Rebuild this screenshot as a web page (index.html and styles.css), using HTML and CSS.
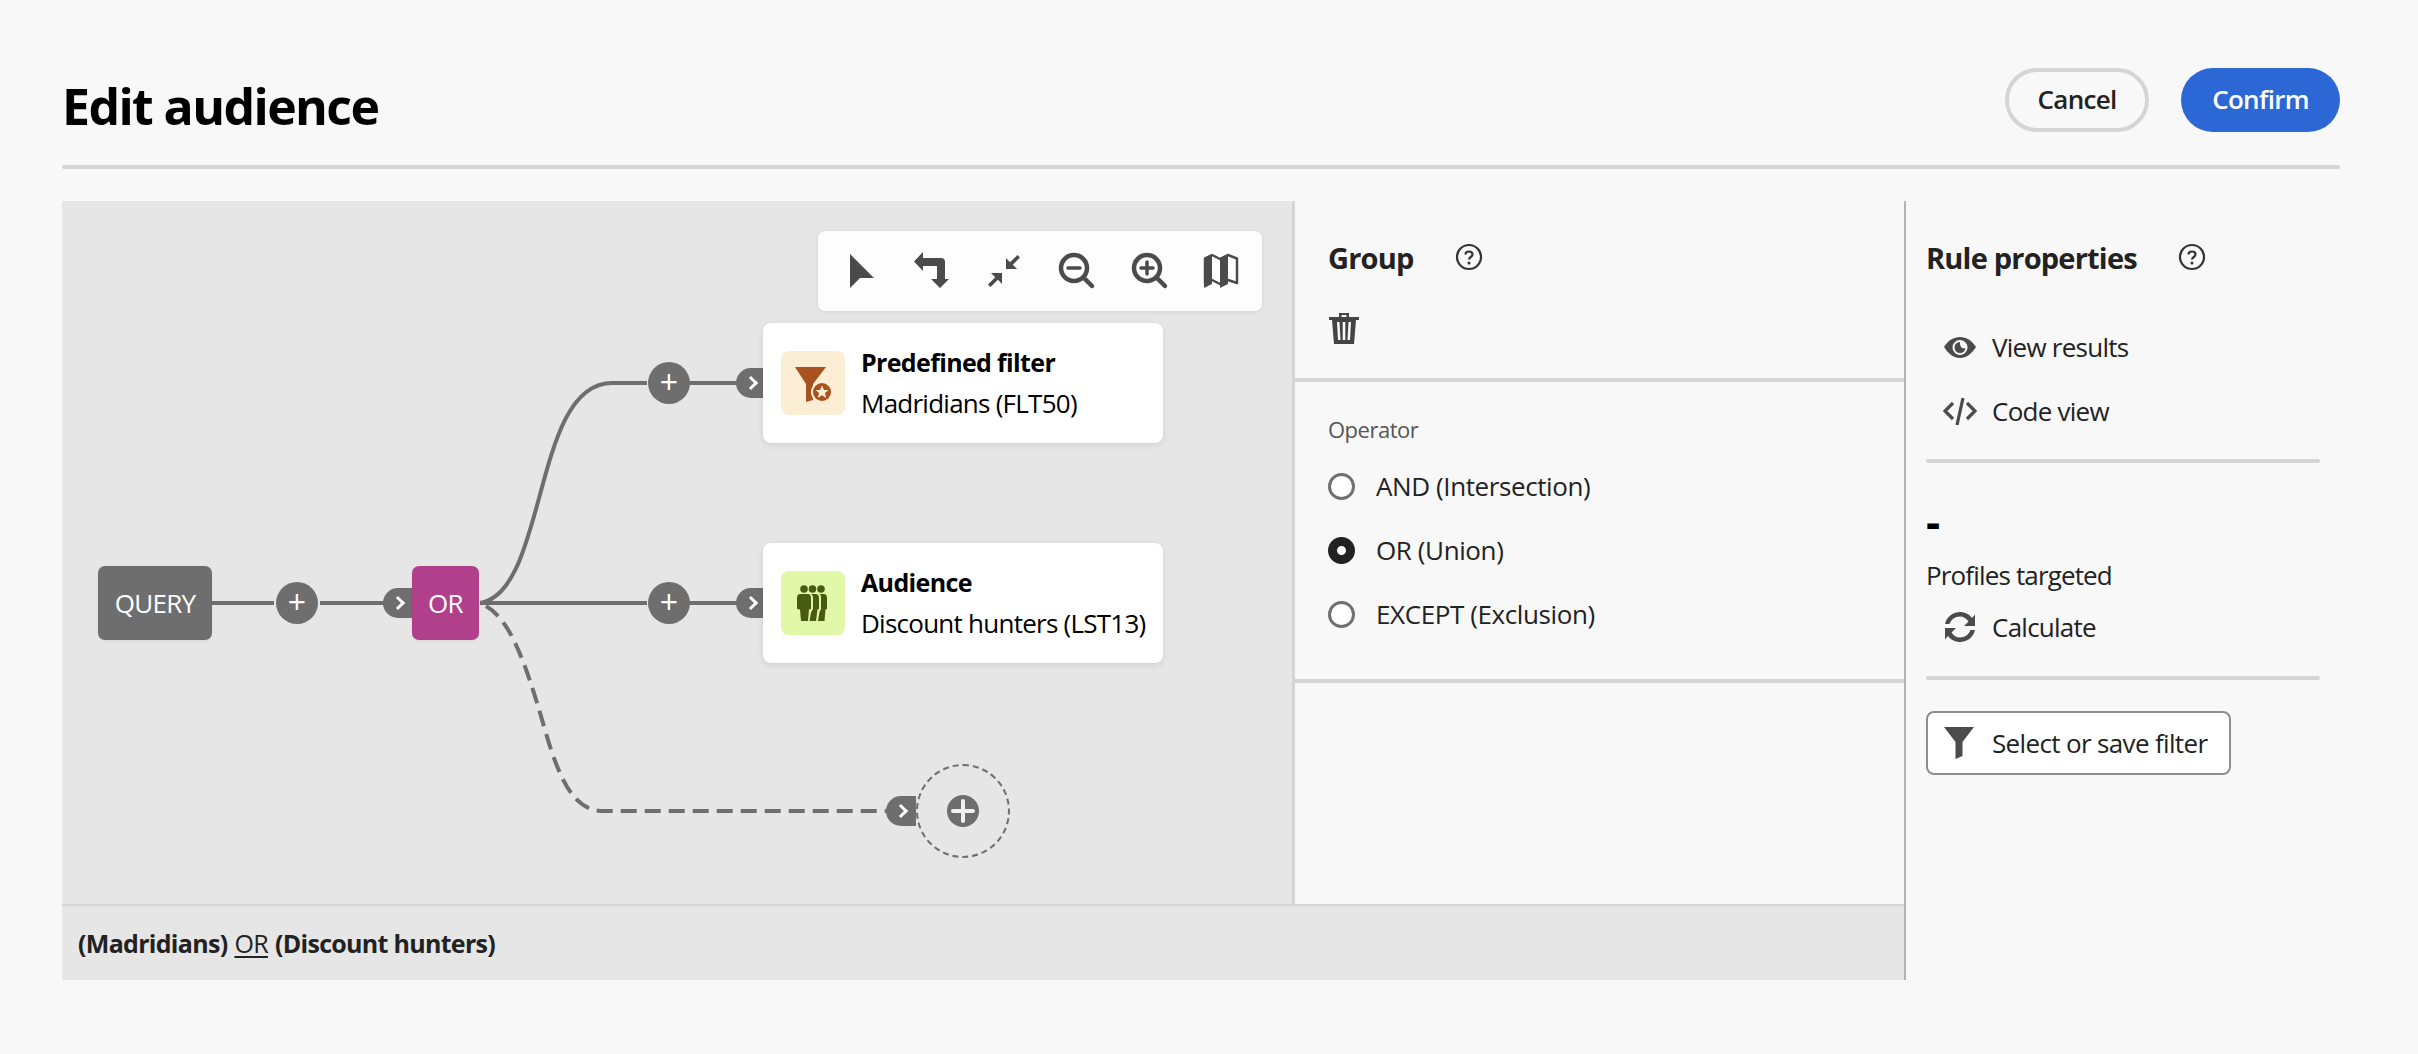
FILE: index.html
```html
<!DOCTYPE html>
<html lang="en">
<head>
<meta charset="utf-8">
<title>Edit audience</title>
<link rel="stylesheet" href="styles.css">
</head>
<body>
<div class="page">
  <header class="header">
    <h1 class="title">Edit audience</h1>
    <div class="actions">
      <button class="btn btn-cancel">Cancel</button>
      <button class="btn btn-confirm">Confirm</button>
    </div>
  </header>
  <div class="rule"></div>
  <div class="workspace">
    <div class="left">
      <div class="top">
        <div class="canvas">
          <svg class="edges" width="1230" height="703" viewBox="62 201 1230 703">
            <g fill="none" stroke="#6e6e6e" stroke-width="4">
              <path d="M212 603H274M320 603H384"/>
              <path d="M480 603H647M689 603H737"/>
              <path d="M480 603C548 592 532 383 612 383H647M689 383H737"/>
              <path class="dash" d="M486 606C510 620 525 660 545 730C560 782 575 811 603 811H887"/>
            </g>
          </svg>

          <div class="toolbar">
            <svg class="tool" viewBox="0 0 40 40"><path d="M8 3L32 27H18L8 37Z"/></svg>
            <svg class="tool" viewBox="0 0 40 40"><path transform="translate(-2 0)" d="M2 10.5L11 1V7H29Q33 7 33 11V28H37L28 37L19 28H25V15H11V20Z"/></svg>
            <svg class="tool" viewBox="0 0 40 40"><path transform="translate(-2 0)" d="M22 7V18H33L28.800 13.800L36 6.500L33.500 4L26 11.200ZM18 33V22H7L11.200 26.200L4 33.500L6.500 36L14 28.800Z"/></svg>
            <svg class="tool" viewBox="0 0 40 40"><circle class="ring" cx="17" cy="17" r="13"/><path class="ring" d="M26.500 26.500L35 35"/><path class="ring thin" d="M11 17H23"/></svg>
            <svg class="tool" viewBox="0 0 40 40"><circle class="ring" cx="18" cy="17" r="13"/><path class="ring" d="M27.500 26.500L36 35"/><path class="ring thin" d="M12 17H24M18 11V23"/></svg>
            <svg class="tool" viewBox="0 0 40 40"><path d="M3 7L11 3V33L3 37Z"/><path d="M19 7L27 3V33L19 37Z"/><path class="ring map" d="M4 7.500L11 4L19 8L27 4L36 7.500V32L27 29L19 33L11 29L4 32Z"/></svg>
          </div>

          <div class="node node-query">QUERY</div>
          <div class="adder adder-query">+</div>
          <div class="pill pill-or"><span class="chev"></span></div>
          <div class="node node-or">OR</div>

          <div class="adder adder-a">+</div>
          <div class="pill pill-a"><span class="chev"></span></div>
          <div class="card card-a">
            <div class="card-icon icon-filter">
              <svg width="64" height="64" viewBox="0 0 64 64">
                <path fill="#a8521f" d="M14 16H45L32 33V49L25 51V33Z"/>
                <circle cx="41" cy="41" r="11" fill="#fcedd5"/>
                <circle cx="41" cy="41" r="9" fill="#a8521f"/>
                <path fill="#fcedd5" d="M41 34.500L43 39H47.500L44 42L45.200 47L41 44.300L36.800 47L38 42L34.500 39H39Z"/>
              </svg>
            </div>
            <div class="card-text">
              <div class="card-title">Predefined filter</div>
              <div class="card-sub">Madridians (FLT50)</div>
            </div>
          </div>

          <div class="adder adder-b">+</div>
          <div class="pill pill-b"><span class="chev"></span></div>
          <div class="card card-b">
            <div class="card-icon icon-audience">
              <svg width="64" height="64" viewBox="0 0 64 64" fill="#4a5a12">
                <circle cx="23" cy="18" r="3.800"/><circle cx="31.500" cy="18" r="3.800"/><circle cx="40" cy="18" r="3.800"/>
                <path d="M19 23H27C29 23 30 25 30 27V38L28 38.500L27 50H20L19 38.500L16 38V27C16 25 17 23 19 23Z"/>
                <path d="M30 23H35C37 23 38 25 38 27V38L36.500 38.500L35 50H28.500L30 41.500L32 38V27C32 25 31.500 24 30 23Z"/>
                <path d="M38.500 23H43C45 23 46 25 46 27V38L44.500 38.500L43.500 50H37L38.500 41L40 38V27C40 25 40 24 38.500 23Z"/>
              </svg>
            </div>
            <div class="card-text">
              <div class="card-title">Audience</div>
              <div class="card-sub">Discount hunters (LST13)</div>
            </div>
          </div>

          <div class="pill pill-c"><span class="chev"></span></div>
          <div class="drop">
            <div class="drop-plus">
              <svg width="32" height="32" viewBox="0 0 32 32"><path d="M16 6V26M6 16H26"/></svg>
            </div>
          </div>
        </div>

        <aside class="group-panel">
          <section class="group-head">
            <div class="heading-row group-row">
              <h2 class="heading">Group</h2>
              <svg class="help" width="28" height="28" viewBox="0 0 28 28"><circle cx="14" cy="14" r="12"/><path d="M10.500 11.500C10.500 9.500 12 8.500 14 8.500C16 8.500 17.500 9.800 17.500 11.500C17.500 14 14 14 14 16.500"/><circle class="dot" cx="14" cy="20" r="1.500"/></svg>
            </div>
            <svg class="trash" width="30" height="32" viewBox="0 0 30 32">
              <path class="trash-fill" d="M10 1H20V5H30V8H27L25 32H5L3 8H0V5H10ZM12.500 3V5H17.500V3ZM8 10L9 28H11.500L10.500 10ZM13.700 10V28H16.300V10ZM19.500 10L18.500 28H21L22 10Z"/>
            </svg>
          </section>
          <section class="operator">
            <div class="op-label">Operator</div>
            <div class="radio"><span class="dot-radio"></span>AND (Intersection)</div>
            <div class="radio"><span class="dot-radio on"></span>OR (Union)</div>
            <div class="radio"><span class="dot-radio"></span>EXCEPT (Exclusion)</div>
          </section>
        </aside>
      </div>
      <footer class="summary"><b>(Madridians)</b> <u>OR</u> <b>(Discount hunters)</b></footer>
    </div>

    <aside class="rule-panel">
      <div class="heading-row rule-row">
        <h2 class="heading">Rule properties</h2>
        <svg class="help" width="28" height="28" viewBox="0 0 28 28"><circle cx="14" cy="14" r="12"/><path d="M10.500 11.500C10.500 9.500 12 8.500 14 8.500C16 8.500 17.500 9.800 17.500 11.500C17.500 14 14 14 14 16.500"/><circle class="dot" cx="14" cy="20" r="1.500"/></svg>
      </div>
      <div class="link">
        <svg class="link-icon" viewBox="0 0 36 36"><path fill-rule="evenodd" d="M2 18C6 11.500 11.500 8 18 8C24.500 8 30 11.500 34 18C30 24.500 24.500 29 18 29C11.500 29 6 24.500 2 18ZM18 11A7.500 7.500 0 1 0 18 26A7.500 7.500 0 1 0 18 11Z"/><path fill-rule="evenodd" d="M18 13A5.500 5.500 0 1 0 23.500 18.500C23 20 20 19.500 19 18C18 16.500 18 14.500 18 13Z"/></svg>
        View results
      </div>
      <div class="link link-code">
        <svg class="link-icon code" viewBox="0 0 36 36"><path d="M11 10L3 18L11 26M25 10L33 18L25 26M21 5L15 32"/></svg>
        Code view
      </div>
      <div class="panel-rule"></div>
      <div class="count">-</div>
      <div class="profiles">Profiles targeted</div>
      <div class="link link-calc">
        <svg class="link-icon" viewBox="0 0 36 36"><path d="M18 3C23 3 27.500 5.500 30 9L33 5.500V17H22L26.500 12.500C24.500 9.500 21.500 7.500 18 7.500C13 7.500 9 10.500 7.500 15H3C4.500 8 10.500 3 18 3ZM18 33C13 33 8.500 30.500 6 27L3 30.500V19H14L9.500 23.500C11.500 26.500 14.500 28.500 18 28.500C23 28.500 27 25.500 28.500 21H33C31.500 28 25.500 33 18 33Z"/></svg>
        Calculate
      </div>
      <div class="panel-rule rule-two"></div>
      <button class="filter-btn">
        <svg class="filter-icon" width="30" height="32" viewBox="0 0 30 32"><path d="M0 0H30L18.500 15V29L11.500 32V15Z"/></svg>
        Select or save filter
      </button>
    </aside>
  </div>
</div>
</body>
</html>
```
FILE: styles.css
```css
* { box-sizing: border-box; }
html, body { margin: 0; height: 100%; }
body {
  background: #f8f8f8;
  color: #222;
  font-family: "Open Sans", "Noto Sans", sans-serif;
  overflow: hidden;
}
.page { padding: 0 78px 0 62px; }
.header {
  height: 165px;
  padding-top: 68px;
  display: flex;
  justify-content: space-between;
  align-items: flex-start;
}
.title {
  margin: 0;
  font-size: 50px;
  line-height: 76px;
  font-weight: 700;
  letter-spacing: -1.6px;
  color: #000;
}
.actions { display: flex; gap: 32px; }
.btn {
  height: 64px;
  border-radius: 32px;
  font: 600 26px/1 "Open Sans", sans-serif;
  letter-spacing: -0.7px;
  padding: 0 0 3px;
  cursor: pointer;
}
.btn-cancel { width: 144px; border: 4px solid #d5d5d5; background: transparent; color: #222; padding-bottom: 3px; }
.btn-confirm { width: 159px; border: 0; background: #2b68d6; color: #fff; }
.rule { height: 4px; border-radius: 2px; background: #d5d5d5; margin-bottom: 32px; }

.workspace { display: flex; height: 779px; }
.left { width: 1842px; display: flex; flex-direction: column; }
.top { height: 703px; display: flex; }
.canvas { width: 1230px; position: relative; background: #e6e6e6; overflow: hidden; }
.edges { position: absolute; left: 0; top: 0; }
.dash { stroke-dasharray: 16 8; }

.toolbar {
  position: absolute;
  left: 756px;
  top: 30px;
  width: 444px;
  height: 80px;
  padding: 0 21px 0 24px;
  display: flex;
  justify-content: space-between;
  align-items: center;
  background: #fdfdfd;
  border-radius: 7px;
  box-shadow: 0 1px 4px rgba(0,0,0,.08);
}
.tool { width: 40px; height: 40px; fill: #4b4b4b; }
.ring { fill: none; stroke: #4b4b4b; stroke-width: 4.500; stroke-linecap: round; }
.ring.thin { stroke-width: 3.500; }
.ring.map { stroke-width: 2.500; stroke-linecap: butt; stroke-linejoin: round; }

.node {
  position: absolute;
  top: 365px;
  height: 74px;
  border-radius: 7px;
  color: #fff;
  font-size: 26px;
  letter-spacing: -0.7px;
  display: flex;
  align-items: center;
  justify-content: center;
  box-shadow: 0 1px 3px rgba(0,0,0,.06);
}
.node-query { left: 36px; width: 114px; background: #6e6e6e; }
.node-or { left: 350px; width: 67px; background: #b0408c; }

.adder {
  position: absolute;
  width: 42px;
  height: 42px;
  border-radius: 50%;
  background: #6e6e6e;
  color: #fff;
  font-size: 32px;
  line-height: 40px;
  text-align: center;
}
.adder-query { left: 214px; top: 381px; }
.adder-a { left: 586px; top: 161px; }
.adder-b { left: 586px; top: 381px; }

.pill {
  position: absolute;
  width: 30px;
  height: 30px;
  background: #6e6e6e;
  border-radius: 15px 0 0 15px;
}
.pill-or { left: 321px; top: 387px; }
.pill-a { left: 674px; top: 167px; }
.pill-b { left: 674px; top: 387px; }
.pill-c { left: 824px; top: 595px; }
.chev {
  position: absolute;
  left: 10px;
  top: 10px;
  width: 10px;
  height: 10px;
  border-top: 3px solid #fff;
  border-right: 3px solid #fff;
  transform: rotate(45deg);
}

.card {
  position: absolute;
  left: 701px;
  width: 400px;
  height: 120px;
  padding: 0 17px 0 18px;
  display: flex;
  align-items: center;
  gap: 16px;
  background: #fff;
  border-radius: 8px;
  box-shadow: 0 2px 6px rgba(0,0,0,.1);
  color: #000;
}
.card-a { top: 122px; }
.card-b { top: 342px; }
.card-icon { width: 64px; height: 64px; border-radius: 8px; flex: none; }
.card-icon svg { display: block; }
.icon-filter { background: #fcedd5; }
.icon-audience { background: #e0f8a8; }
.card-text { display: flex; flex-direction: column; gap: 7px; white-space: nowrap; margin-top: -2px; }
.card-title { font-size: 25px; line-height: 34px; font-weight: 700; letter-spacing: -0.65px; }
.card-sub { font-size: 26px; line-height: 34px; letter-spacing: -0.75px; }

.drop {
  position: absolute;
  left: 854px;
  top: 563px;
  width: 94px;
  height: 94px;
  border-radius: 50%;
  border: 2px dashed #6e6e6e;
  display: flex;
  align-items: center;
  justify-content: center;
}
.drop-plus { width: 32px; height: 32px; border-radius: 50%; background: #6e6e6e; }
.drop-plus svg { display: block; fill: none; stroke: #f2f2f2; stroke-width: 4; stroke-linecap: round; }

.group-panel { flex: 1; border-left: 3px solid #d5d5d5; }
.group-head { height: 181px; padding: 37px 0 0 33px; border-bottom: 4px solid #d5d5d5; }
.heading-row { display: flex; align-items: center; }
.group-row { gap: 41px; height: 44px; }
.heading { margin: -4px 0 0; font-size: 29px; line-height: 44px; font-weight: 700; letter-spacing: -0.8px; color: #222; }
.help { fill: none; stroke: #333; stroke-width: 2.200; margin-top: -6px; }
.help .dot { fill: #333; stroke: none; }
.trash { display: block; margin: 30px 0 0 1px; }
.trash-fill { fill: #444; fill-rule: evenodd; }

.operator { height: 301px; padding: 31px 0 0 33px; border-bottom: 4px solid #d5d5d5; }
.op-label { font-size: 22px; line-height: 32px; letter-spacing: -0.5px; color: #555; margin-bottom: 21px; }
.radio {
  height: 40px;
  margin-bottom: 24px;
  display: flex;
  align-items: center;
  gap: 21px;
  font-size: 26px;
  letter-spacing: -0.4px;
  color: #222;
}
.dot-radio { width: 27px; height: 27px; border-radius: 50%; border: 3px solid #707070; background: #fff; flex: none; }
.dot-radio.on { border: 9px solid #222; }

.summary {
  height: 76px;
  padding-left: 16px;
  display: flex;
  align-items: center;
  gap: 7px;
  background: #e6e6e6;
  border-top: 2px solid #d5d5d5;
  font-size: 25px;
  letter-spacing: -0.7px;
  color: #222;
  white-space: pre;
}
.summary u { text-underline-offset: 3px; }

.rule-panel { flex: 1; border-left: 2px solid #b3b3b3; padding: 37px 0 0 20px; }
.rule-row { gap: 41px; height: 44px; }
.link {
  display: flex;
  align-items: center;
  gap: 14px;
  height: 40px;
  margin-left: 16px;
  font-size: 26px;
  letter-spacing: -0.75px;
  color: #222;
}
.rule-row + .link { margin-top: 45px; }
.link-code { margin-top: 24px; }
.link-icon { width: 36px; height: 36px; fill: #4b4b4b; flex: none; }
.link-icon.code { fill: none; stroke: #4b4b4b; stroke-width: 3.200; }
.panel-rule { width: 394px; height: 4px; border-radius: 2px; background: #d5d5d5; margin-top: 28px; }
.count { font-size: 44px; font-weight: 700; line-height: 50px; color: #000; margin-top: 33px; }
.profiles { font-size: 26px; letter-spacing: -0.85px; line-height: 34px; margin-top: 12px; color: #222; }
.link-calc { margin-top: 15px; }
.rule-two { margin-top: 29px; }
.filter-btn {
  display: flex;
  align-items: center;
  gap: 18px;
  width: 305px;
  height: 64px;
  margin-top: 31px;
  padding: 0 0 0 16px;
  border: 2px solid #8e8e8e;
  border-radius: 8px;
  background: #fff;
  font: 400 26px "Open Sans", sans-serif;
  letter-spacing: -0.65px;
  color: #222;
}
.filter-icon { fill: #4b4b4b; flex: none; }
```
